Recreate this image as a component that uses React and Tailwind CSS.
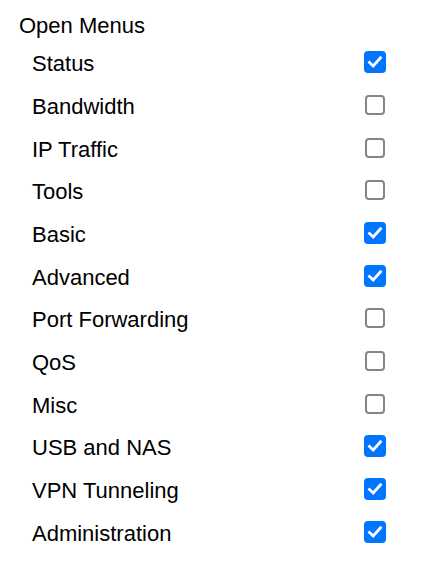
import React, { useState } from 'react';

const items = [
  ['Status', true],
  ['Bandwidth', false],
  ['IP Traffic', false],
  ['Tools', false],
  ['Basic', true],
  ['Advanced', true],
  ['Port Forwarding', false],
  ['QoS', false],
  ['Misc', false],
  ['USB and NAS', true],
  ['VPN Tunneling', true],
  ['Administration', true],
];

function Box({ on, onToggle }) {
  return (
    <label className="relative w-[22px] h-[22px] block">
      <input type="checkbox" checked={on} onChange={onToggle} className="sr-only" />
      {on ? (
        <span className="absolute inset-0 rounded-[4px] bg-[#0075ff] flex items-center justify-center">
          <svg width="16" height="16" viewBox="0 0 16 16" fill="none">
            <path d="M2.5 8.5 L6.2 12 L13.5 3.8" stroke="white" strokeWidth="2.8" strokeLinecap="square" />
          </svg>
        </span>
      ) : (
        <span className="absolute inset-[1px] rounded-[4px] border-2 border-[#858585] bg-white" />
      )}
    </label>
  );
}

export default function App() {
  const [checked, setChecked] = useState(items.map((i) => i[1]));

  const toggle = (idx) => {
    setChecked((prev) => prev.map((v, i) => (i === idx ? !v : v)));
  };

  return (
    <div className="bg-white w-[430px] h-[572px] text-black text-[22px] leading-none pt-[14px] pl-[19px]" style={{ fontFamily: '"Liberation Sans", Arial, sans-serif' }}>
      <div className="h-[24px] flex items-center">Open Menus</div>
      <div className="pl-[13px] pt-[3px]">
        {items.map(([label], idx) => (
          <div key={label} className="h-[42.67px] flex items-center">
            <span className="w-[332px] pt-[4px]">{label}</span>
            <Box on={checked[idx]} onToggle={() => toggle(idx)} />
          </div>
        ))}
      </div>
    </div>
  );
}
